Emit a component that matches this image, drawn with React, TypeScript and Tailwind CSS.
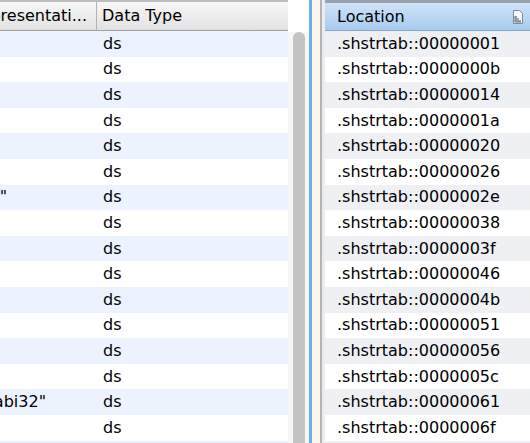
import React from 'react';

const ROW_COUNT = 17;

// first column is scrolled horizontally, so only the tail of some strings shows
const valueTails: Record<number, { text: string; pad: string }> = {
  6: { text: '"_aeabi"', pad: 'pr-[91px]' },
  14: { text: '"aeabi32"', pad: 'pr-[52px]' },
};

const locations = [
  '00000001', '0000000b', '00000014', '0000001a', '00000020', '00000026',
  '0000002e', '00000038', '0000003f', '00000046', '0000004b', '00000051',
  '00000056', '0000005c', '00000061', '0000006f', '00000074',
];

const ColumnIcon: React.FC = () => (
  <svg width="12" height="16" viewBox="0 0 12 16" className="shrink-0">
    <path d="M1.5 1.5h6l3 3v10h-9z" fill="#f4f6f8" stroke="#7d8a96" strokeWidth="1" />
    <path d="M3 7h2v2h2v2h2v2H3z" fill="#9aa6b2" />
    <path d="M3 7v6h6" fill="none" stroke="#6b7783" strokeWidth="1" />
  </svg>
);

export default function App() {
  const rows = Array.from({ length: ROW_COUNT }, (_, i) => i);

  return (
    <div
      className="flex w-[530px] h-[443px] overflow-hidden bg-white text-[16px] text-black"
      style={{ fontFamily: '"DejaVu Sans", Verdana, sans-serif' }}
    >
      {/* left table */}
      <div className="flex flex-col w-[288px] shrink-0">
        <div className="flex h-[31px] shrink-0 border-t-2 border-t-[#bdbdbd] border-b border-b-[#9f9f9f] bg-gradient-to-b from-[#f7f7f7] to-[#e2e2e2]">
          <div className="flex w-[97px] shrink-0 items-center justify-end overflow-hidden pr-[9px] whitespace-nowrap border-r border-r-[#b3b3b3]">
            Representati...
          </div>
          <div className="flex flex-1 items-center pl-[5px] whitespace-nowrap">Data Type</div>
        </div>
        {rows.map((i) => (
          <div
            key={i}
            className={`flex h-[25.6px] shrink-0 items-center ${i % 2 === 0 ? 'bg-[#edf3fe]' : 'bg-white'}`}
          >
            <div
              className={`flex w-[98px] shrink-0 justify-end overflow-hidden whitespace-nowrap ${valueTails[i]?.pad ?? ''}`}
            >
              {valueTails[i]?.text ?? ''}
            </div>
            <div className="pl-[5px]">ds</div>
          </div>
        ))}
      </div>

      {/* vertical scrollbar */}
      <div className="flex flex-col w-[21px] shrink-0 bg-[#f6f6f6]">
        <div className="h-[32px] shrink-0 bg-white" />
        <div className="ml-[5px] w-[12px] flex-1 rounded-t-full bg-[#c3c3c3]" />
      </div>

      {/* split divider */}
      <div className="w-[3px] shrink-0 bg-[#6ab0e6]" />
      <div className="w-[8px] shrink-0 bg-[#f9f6ee]" />
      <div className="w-[2px] shrink-0 bg-[#b4b4b4]" />
      <div className="w-[3px] shrink-0 bg-[#ececec]" />

      {/* right table */}
      <div className="flex flex-col flex-1 min-w-0">
        <div className="flex h-[31px] shrink-0 items-center justify-between border-t-[3px] border-t-[#9aa2ab] border-b border-b-[#8ba6c2] bg-gradient-to-b from-[#cfe3f8] to-[#a6cbee] pl-[12px] pr-[6px]">
          <span className="whitespace-nowrap">Location</span>
          <ColumnIcon />
        </div>
        {locations.map((loc, i) => (
          <div
            key={loc}
            className={`flex h-[25.6px] shrink-0 items-center pl-[12px] whitespace-nowrap ${i % 2 === 0 ? 'bg-[#eef0f4]' : 'bg-white'}`}
          >
            .shstrtab::{loc}
          </div>
        ))}
      </div>
    </div>
  );
}
